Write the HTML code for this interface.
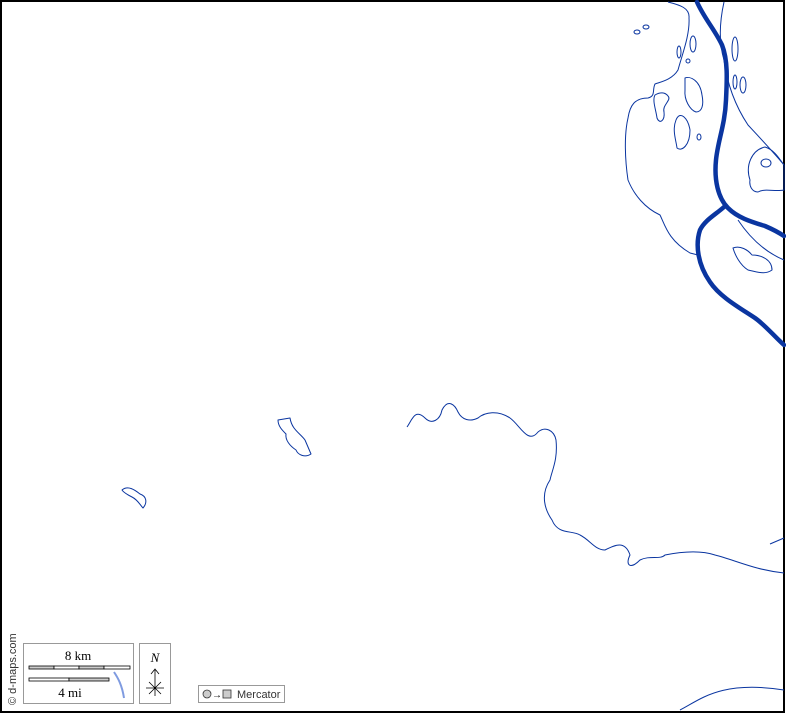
<!DOCTYPE html>
<html><head><style>
html,body{margin:0;padding:0;background:#fff}
.w{position:relative;width:786px;height:713px;overflow:hidden;font-family:"Liberation Serif",serif}
</style></head><body><div class="w">
<svg width="786" height="713" viewBox="0 0 786 713" style="position:absolute;left:0;top:0">
<rect x="1" y="1" width="783" height="711" fill="#fff" stroke="#000" stroke-width="2"/>
<g fill="none" stroke="#0a35a0" stroke-width="1" stroke-linejoin="round">
<path d="M668,2 C680,5 690,8 689,18 C690,35 682,55 678,70 C672,80 660,82 655,84 C652,90 656,96 648,98 C635,98 630,105 628,118 C624,135 625,160 628,180 C634,195 645,208 660,215 C665,225 668,240 690,253 L698,255"/>
<path d="M724,2 C720,20 718,40 724,60 C728,90 738,110 748,125 C762,140 776,155 784,165"/>
<path d="M750,180 C745,165 752,150 765,147 C775,150 780,160 784,165 L784,190 C775,192 765,188 758,192 C752,192 749,186 750,180Z"/>
<ellipse cx="766" cy="163" rx="5" ry="4"/>
<path d="M738,220 C750,238 765,252 784,260"/>
<path d="M655,95 C660,92 665,92 668,96 C672,100 662,105 664,112 C665,120 660,125 657,118 C656,110 652,100 655,95Z"/>
<path d="M685,78 C690,76 700,80 702,95 C704,105 702,112 696,112 C690,110 684,100 685,90Z"/>
<path d="M676,120 C680,110 688,118 690,130 C690,145 682,152 677,148 C676,140 672,130 676,120Z"/>
<ellipse cx="637" cy="32" rx="3" ry="2"/><ellipse cx="646" cy="27" rx="3" ry="2"/>
<ellipse cx="693" cy="44" rx="3" ry="8"/><ellipse cx="679" cy="52" rx="2" ry="6"/><ellipse cx="688" cy="61" rx="2" ry="2"/>
<ellipse cx="735" cy="49" rx="3" ry="12"/><ellipse cx="735" cy="82" rx="2" ry="7"/><ellipse cx="743" cy="85" rx="3" ry="8"/><ellipse cx="699" cy="137" rx="2" ry="3"/>
<path d="M733,248 C740,245 748,250 752,255 C762,255 772,260 772,270 C765,275 758,272 748,270 C740,265 735,255 733,248Z"/>
<path d="M407,427 C412,420 415,408 425,418 C432,425 440,420 442,410 C448,398 455,405 458,412 C462,420 470,422 478,418 C485,412 498,410 510,418 C520,425 528,445 538,432 C545,426 554,430 556,440 C558,460 552,470 550,480 C540,495 545,510 552,520 C558,535 572,530 580,535 C590,540 595,550 605,550 C615,545 625,540 630,555 C625,565 630,570 640,560 C650,555 660,560 665,555 C680,552 700,550 715,555 C735,560 755,570 784,573"/>
<path d="M770,544 L784,538"/>
<path d="M680,710 C700,700 720,680 784,690"/>
<path d="M278,420 L290,418 C292,430 300,433 305,440 L311,454 C305,458 298,455 296,450 C290,446 285,440 286,434 C282,430 278,426 278,420Z"/>
<path d="M122,490 C128,485 135,490 140,494 C146,496 148,502 143,508 C140,505 138,500 132,497 C128,495 124,493 122,490Z"/>
</g>
<g fill="none" stroke="#0a35a0" stroke-width="4.5" stroke-linecap="round" stroke-linejoin="round">
<path d="M697,2 C704,18 715,30 722,45 C728,60 727,80 726,100 C725,125 718,140 716,160 C714,180 718,198 728,208 C738,218 752,222 765,226 C772,229 778,232 784,236"/>
<path d="M724,207 C715,215 705,220 700,230 C695,245 698,265 710,282 C720,297 740,308 755,318 C765,325 774,336 784,345"/>
</g>
<!-- scale box -->
<rect x="23.5" y="643.5" width="110" height="60" fill="#fff" stroke="#999"/>
<rect x="139.5" y="643.5" width="31" height="60" fill="#fff" stroke="#999"/>
<rect x="198.5" y="685.5" width="86" height="17" fill="#fff" stroke="#999"/>
<g stroke="#000" stroke-width="0.8">
<rect x="29" y="666" width="25" height="3" fill="#ccc"/><rect x="54" y="666" width="25" height="3" fill="#fff"/>
<rect x="79" y="666" width="25" height="3" fill="#ccc"/><rect x="104" y="666" width="26" height="3" fill="#fff"/>
<rect x="29" y="678" width="40" height="3" fill="#fff"/><rect x="69" y="678" width="40" height="3" fill="#ccc"/>
</g>
<path d="M114,672 C118,678 122,685 124,698" stroke="#7f9be0" stroke-width="2" fill="none"/>
<text x="78" y="660" font-size="13" text-anchor="middle" font-family="Liberation Serif">8 km</text>
<text x="70" y="697" font-size="13" text-anchor="middle" font-family="Liberation Serif">4 mi</text>
<text x="155" y="662" font-size="13" text-anchor="middle" font-style="italic" font-family="Liberation Serif">N</text>
<g stroke="#000" stroke-width="0.8" fill="none">
<path d="M155,670 L155,696 M151,674 L155,669 L159,674 M146,688 L164,688 M149,682 L161,694 M161,682 L149,694"/>
</g>
<circle cx="207" cy="694" r="4" fill="#ccc" stroke="#333" stroke-width="0.8"/>
<text x="212" y="698" font-size="10" font-family="Liberation Sans">→</text>
<rect x="223" y="690" width="8" height="8" fill="#ccc" stroke="#333" stroke-width="0.8"/>
<text x="237" y="698" font-size="11" font-family="Liberation Sans" fill="#333">Mercator</text>
<text transform="translate(16,705) rotate(-90)" font-size="11" font-family="Liberation Sans" fill="#333">© d-maps.com</text>
</svg>
</div></body></html>
